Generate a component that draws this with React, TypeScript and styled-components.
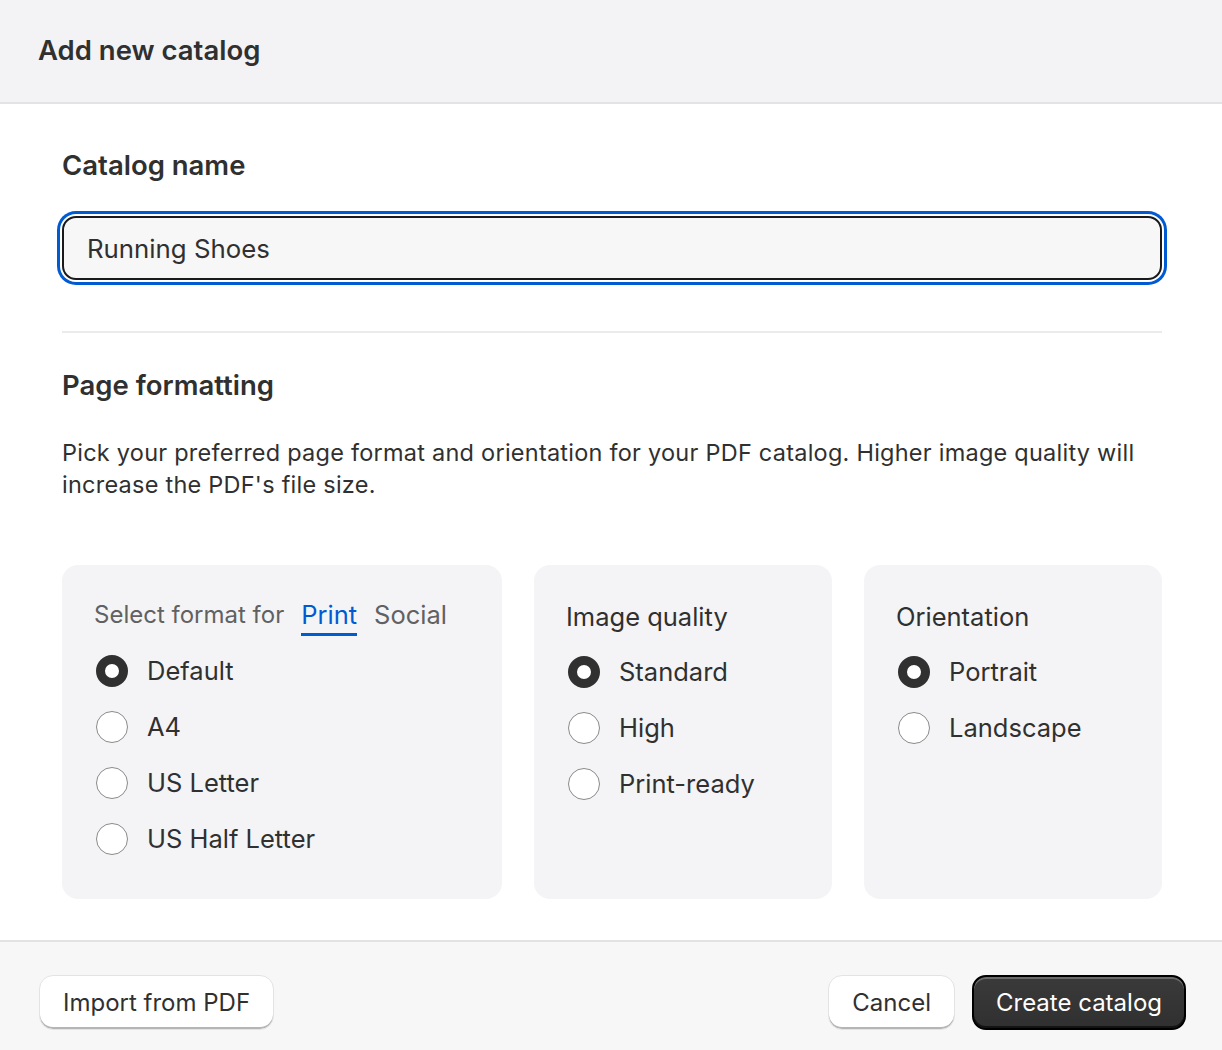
import React, { useState } from 'react';
import styled, { createGlobalStyle } from 'styled-components';

const GlobalStyle = createGlobalStyle`
  html, body {
    margin: 0;
    padding: 0;
    background: #ffffff;
  }
  body {
    font-family: Inter, "Noto Sans", "Liberation Sans", sans-serif;
    color: #303030;
    -webkit-font-smoothing: antialiased;
  }
  * {
    box-sizing: border-box;
  }
`;

const formatOptions = ['Default', 'A4', 'US Letter', 'US Half Letter'];
const qualityOptions = ['Standard', 'High', 'Print-ready'];
const orientationOptions = ['Portrait', 'Landscape'];

interface RadioGroupProps {
  options: string[];
  value: string;
  onChange: (v: string) => void;
}

const RadioGroup = ({ options, value, onChange }: RadioGroupProps) => (
  <RadioList>
    {options.map((opt) => (
      <RadioRow key={opt} onClick={() => onChange(opt)}>
        <RadioCircle $checked={value === opt} />
        <RadioLabel>{opt}</RadioLabel>
      </RadioRow>
    ))}
  </RadioList>
);

const App = () => {
  const [name, setName] = useState('Running Shoes');
  const [tab, setTab] = useState('Print');
  const [format, setFormat] = useState('Default');
  const [quality, setQuality] = useState('Standard');
  const [orientation, setOrientation] = useState('Portrait');

  return (
    <Modal>
      <GlobalStyle />
      {/* 헤더 */}
      <Header>
        <Title>Add new catalog</Title>
      </Header>

      <Body>
        <SectionTitle>Catalog name</SectionTitle>
        <NameInput value={name} onChange={(e) => setName(e.target.value)} />

        <Divider />

        <SectionTitle>Page formatting</SectionTitle>
        <Description>
          Pick your preferred page format and orientation for your PDF catalog. Higher image quality
          will increase the PDF's file size.
        </Description>

        <Cards>
          <Card>
            <TabsRow>
              <TabsLabel>Select format for</TabsLabel>
              {['Print', 'Social'].map((t) => (
                <Tab key={t} $active={tab === t} onClick={() => setTab(t)}>
                  {t}
                </Tab>
              ))}
            </TabsRow>
            <RadioGroup options={formatOptions} value={format} onChange={setFormat} />
          </Card>

          <Card>
            <CardTitle>Image quality</CardTitle>
            <RadioGroup options={qualityOptions} value={quality} onChange={setQuality} />
          </Card>

          <Card>
            <CardTitle>Orientation</CardTitle>
            <RadioGroup options={orientationOptions} value={orientation} onChange={setOrientation} />
          </Card>
        </Cards>
      </Body>

      {/* 푸터 버튼 */}
      <Footer>
        <SecondaryButton>Import from PDF</SecondaryButton>
        <FooterActions>
          <SecondaryButton>Cancel</SecondaryButton>
          <PrimaryButton>Create catalog</PrimaryButton>
        </FooterActions>
      </Footer>
    </Modal>
  );
};

export default App;

const Modal = styled.div`
  width: 1222px;
  height: 1050px;
  display: flex;
  flex-direction: column;
  background: #ffffff;
  overflow: hidden;
`;

const Header = styled.header`
  height: 104px;
  flex-shrink: 0;
  display: flex;
  align-items: center;
  padding: 0 38px 2px;
  background: #f3f3f5;
  border-bottom: 2px solid #e3e3e3;
`;

const Title = styled.h1`
  margin: 0;
  font-size: 27.5px;
  line-height: 32px;
  font-weight: 600;
  color: #303030;
`;

const Body = styled.main`
  flex-shrink: 0;
  display: flex;
  flex-direction: column;
  padding: 45px 60px 41px 62px;
`;

const SectionTitle = styled.h2`
  margin: 0;
  font-size: 27.5px;
  line-height: 32px;
  font-weight: 600;
  color: #303030;
`;

const NameInput = styled.input`
  margin-top: 35px;
  height: 64px;
  width: 100%;
  padding: 0 23px;
  border: 2px solid #1a1a1a;
  border-radius: 14px;
  background: #f7f7f7;
  font-family: inherit;
  font-size: 25.8px;
  color: #303030;
  outline: none;
  box-shadow: 0 0 0 2px #ffffff, 0 0 0 5px #005bd3;
`;

const Divider = styled.hr`
  margin: 51px 0 36px;
  border: none;
  border-top: 2px solid #ebebeb;
`;

const Description = styled.p`
  margin: 36px 0 0;
  font-size: 23.5px;
  line-height: 32px;
  letter-spacing: 0.24px;
  color: #303030;
  max-width: 1100px;
`;

const Cards = styled.div`
  margin-top: 64px;
  display: grid;
  grid-template-columns: 440px 298px 298px;
  gap: 32px;
`;

const Card = styled.section`
  height: 334px;
  display: flex;
  flex-direction: column;
  gap: 19px;
  padding: 34px 32px 32px;
  background: #f4f4f6;
  border-radius: 16px;
`;

const TabsRow = styled.div`
  display: flex;
  align-items: flex-start;
  gap: 17px;
`;

const TabsLabel = styled.span`
  font-size: 24px;
  line-height: 32px;
  color: #616161;
`;

const Tab = styled.span<{ $active?: boolean }>`
  font-size: 25.5px;
  line-height: 32px;
  padding-bottom: 2px;
  cursor: pointer;
  color: ${({ $active }) => ($active ? '#005bd3' : '#616161')};
  border-bottom: 3px solid ${({ $active }) => ($active ? '#005bd3' : 'transparent')};
`;

const CardTitle = styled.h3`
  margin: 0;
  padding: 2px 0 4px;
  font-size: 25.5px;
  line-height: 32px;
  font-weight: 400;
  color: #303030;
`;

const RadioList = styled.div`
  display: flex;
  flex-direction: column;
  gap: 24px;
`;

const RadioRow = styled.label`
  display: flex;
  align-items: center;
  gap: 19px;
  height: 32px;
  padding-left: 2px;
  cursor: pointer;
`;

const RadioCircle = styled.span<{ $checked?: boolean }>`
  width: 32px;
  height: 32px;
  flex-shrink: 0;
  border-radius: 50%;
  background: #ffffff;
  border: ${({ $checked }) => ($checked ? '9px solid #303030' : '1.5px solid #8a8a8a')};
`;

const RadioLabel = styled.span`
  font-size: 25.5px;
  line-height: 32px;
  color: #303030;
`;

const Footer = styled.footer`
  flex: 1;
  display: flex;
  justify-content: space-between;
  align-items: flex-start;
  padding: 33px 36px 0 39px;
  background: #f7f7f7;
  border-top: 2px solid #e3e3e3;
`;

const FooterActions = styled.div`
  display: flex;
  gap: 17px;
`;

const BaseButton = styled.button`
  height: 55px;
  padding: 0 23px;
  border-radius: 14px;
  font-family: inherit;
  font-size: 24px;
  font-weight: 400;
  cursor: pointer;
`;

const SecondaryButton = styled(BaseButton)`
  background: #ffffff;
  color: #303030;
  border: 1.5px solid #e3e3e3;
  box-shadow: inset 0 -2px 0 #b5b5b5;
`;

const PrimaryButton = styled(BaseButton)`
  padding: 0 22px;
  background: linear-gradient(180deg, #3a3a3a 0%, #303030 100%);
  color: #ffffff;
  border: 2px solid #000000;
  box-shadow: inset 0 2px 0 rgba(255, 255, 255, 0.25), inset 0 -2px 0 rgba(0, 0, 0, 0.6);
`;
